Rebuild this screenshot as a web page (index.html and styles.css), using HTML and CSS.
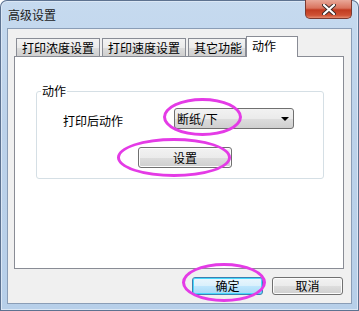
FILE: index.html
```html
<!DOCTYPE html>
<html lang="zh-CN">
<head>
  <meta charset="UTF-8" />
  <title>高级设置</title>
  <link rel="stylesheet" href="styles.css">
</head>
<body>
  <div class="window">
    <div class="titlebar">
      <span class="title">高级设置</span>
      <div class="close">
        <svg width="14" height="11" viewBox="0 0 14 11">
          <path d="M2 1 L12 10 M12 1 L2 10" stroke="#3a2a28" stroke-width="4" stroke-linecap="round"/>
          <path d="M2 1 L12 10 M12 1 L2 10" stroke="#ffffff" stroke-width="2.2" stroke-linecap="round"/>
        </svg>
      </div>
    </div>

    <div class="client">
      <div class="tabs">
        <div class="tab t1">打印浓度设置</div>
        <div class="tab t2">打印速度设置</div>
        <div class="tab t3">其它功能</div>
        <div class="tab t4 active">动作</div>
      </div>

      <div class="panel">
        <div class="group">
          <span class="group-title">动作</span>
          <div class="row">
            <span class="label">打印后动作</span>
            <div class="combo">
              <span>断纸/下</span>
              <span class="arrow"></span>
            </div>
          </div>
          <div class="row-btn">
            <button class="btn set">设置</button>
          </div>
        </div>
      </div>

      <div class="footer">
        <button class="btn ok default">确定</button>
        <button class="btn cancel">取消</button>
      </div>
    </div>

    <!-- hand-drawn annotation rings -->
    <div class="ring ring-combo"></div>
    <div class="ring ring-set"></div>
    <div class="ring ring-ok"></div>
  </div>
</body>
</html>
```

FILE: styles.css
```css
body {
  margin: 0;
  background: #ffffff;
  font-family: "Noto Sans CJK SC", "Liberation Sans", sans-serif;
  font-size: 12px;
  color: #000;
}

.window {
  position: relative;
  width: 359px;
  height: 311px;
  box-sizing: border-box;
  border-radius: 7px 7px 0 0;
  background: linear-gradient(#c6daef, #bcd2ea 40%, #b7cfe9);
  box-shadow: inset 0 0 0 1px #5d7290, inset 0 0 0 2px #dbe7f5;
  overflow: hidden;
}

.titlebar {
  height: 28px;
  display: flex;
  justify-content: space-between;
  padding: 0 7px 0 8px;
}

.title {
  line-height: 14px;
  margin-top: 8px;
  color: #1b1b1b;
}

.close {
  width: 47px;
  height: 19px;
  box-sizing: border-box;
  border: 1px solid #7a3a30;
  border-top: none;
  border-radius: 0 0 5px 5px;
  background: linear-gradient(#e9a898, #d9735d 45%, #c13b20 55%, #cf5234 85%, #e48b70);
  display: flex;
  align-items: center;
  justify-content: center;
}

.client {
  margin: 0 7px;
  height: 276px;
  box-sizing: border-box;
  border: 1px solid #8a9db6;
  background: #f0f0f0;
}

.tabs {
  display: flex;
  align-items: flex-end;
  height: 20px;
  padding: 7px 0 0 8px;
}

.tab {
  height: 18px;
  box-sizing: border-box;
  padding: 0 5px;
  margin-right: 1px;
  line-height: 17px;
  border: 1px solid #898c95;
  border-bottom: none;
  background: linear-gradient(#f3f3f3, #ebebeb 50%, #dddddd 51%, #cfcfcf);
  white-space: nowrap;
}

.t1 { width: 84px; }
.t2 { width: 84px; margin-left: 1px; }
.t3 { width: 58px; margin-left: 1px; }

.tab.active {
  width: 52px;
  height: 21px;
  margin: 0 0 -1px -1px;
  position: relative;
  background: #ffffff;
  line-height: 18px;
  padding-left: 5px;
}

.panel {
  margin-left: 6px;
  width: 330px;
  height: 213px;
  box-sizing: border-box;
  border: 1px solid #898c95;
  background: #ffffff;
  padding: 34px 0 0 21px;
}

.group {
  position: relative;
  width: 288px;
  height: 88px;
  box-sizing: border-box;
  border: 1px solid #d5dfe5;
  border-radius: 3px;
  padding: 16px 29px 0 26px;
}

.group-title {
  position: absolute;
  top: -8px;
  left: 4px;
  padding: 0 1px;
  background: #ffffff;
  line-height: 14px;
}

.row {
  display: flex;
  justify-content: space-between;
  align-items: center;
  height: 21px;
}

.label {
  line-height: 14px;
  margin-top: 4px;
}

.combo {
  width: 120px;
  height: 21px;
  box-sizing: border-box;
  border: 1px solid #707070;
  border-radius: 3px;
  background: linear-gradient(#f2f2f2, #ebebeb 50%, #dddddd 51%, #cfcfcf);
  display: flex;
  align-items: center;
  justify-content: space-between;
  padding: 0 4px 0 2px;
  line-height: 14px;
}

.arrow {
  width: 0;
  height: 0;
  border-left: 4px solid transparent;
  border-right: 4px solid transparent;
  border-top: 4px solid #000;
  margin-top: 1px;
}

.row-btn {
  margin-top: 18px;
  padding-left: 75px;
}

.btn {
  font-family: inherit;
  font-size: 12px;
  color: #000;
  box-sizing: border-box;
  border: 1px solid #707070;
  border-radius: 3px;
  background: linear-gradient(#f2f2f2, #ebebeb 50%, #dddddd 51%, #cfcfcf);
  box-shadow: inset 0 0 0 1px #fcfcfc;
  padding: 0;
  line-height: 14px;
}

.set {
  width: 94px;
  height: 21px;
}

.footer {
  display: flex;
  justify-content: flex-end;
  gap: 9px;
  padding: 8px 8px 0 0;
}

.ok,
.cancel {
  width: 71px;
  height: 18px;
}

.default {
  border-color: #3c7fb1;
  background: linear-gradient(#eaf6fd, #d9f0fc 50%, #bee6fd 51%, #a7d9f5);
  box-shadow: inset 0 0 0 1px #48d8fb;
}

.ring {
  position: absolute;
  box-sizing: border-box;
  border: 3px solid #e43be6;
  border-radius: 50%;
}

.ring-combo {
  left: 163px;
  top: 98px;
  width: 79px;
  height: 38px;
}

.ring-set {
  left: 117px;
  top: 138px;
  width: 114px;
  height: 39px;
}

.ring-ok {
  left: 182px;
  top: 263px;
  width: 84px;
  height: 39px;
}
```
